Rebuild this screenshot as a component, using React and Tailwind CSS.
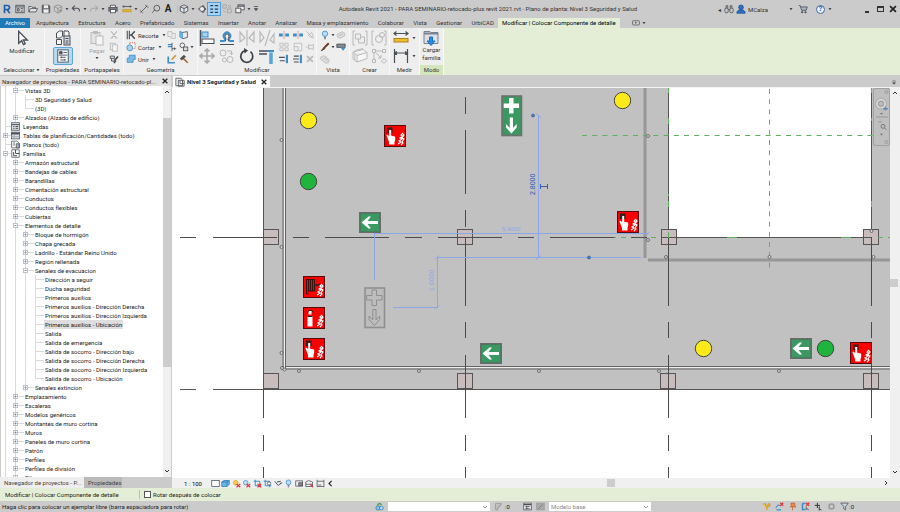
import { useState } from 'react';

const BLUE = '#3b8ec9';
const INK = '#4a4f57';
const OFF = '#b9b9b9';

// every glyph is drawn on a 12x12 grid
const glyphs = {
  revit: <><path d="M3 1v10M3 1.8h3.6a2.4 2.4 0 0 1 0 4.8H3M6 6.6l3.4 4.4" stroke="#1f5fa8" strokeWidth="2" /></>,
  home: <><rect x="1" y="1.5" width="10" height="9" /><path d="M1 3.5h10M3 5.5h2v3H3zM7 5.5h2.500M7 8.500h2.500" /></>,
  open: <><path d="M1 9.500V3h3l1 1h4v1.500M1 9.500l2-4h8.500l-2 4z" fill="#e6e6e6" /></>,
  save: <><path d="M1.500 1.500h8l1 1v8h-9z" fill="#6b7078" /><rect x="3.500" y="1.500" width="5" height="3.500" fill="#eee" stroke="none" /><rect x="3" y="6.500" width="6" height="4" fill="#eee" stroke="none" /></>,
  sync: <><path d="M6 1l4.500 2v5L6 11 1.500 8V3zM1.500 3L6 5.500 10.500 3M6 5.500V11" stroke="#8b8b8b" /><path d="M7 8h4M9 6.500v3.500" stroke="#8b8b8b" /></>,
  undo: <path d="M4.500 2L1.500 5l3 3M1.500 5h6a2.500 2.500 0 0 1 2.500 2.500V9" strokeWidth="1.300" />,
  redo: <path d="M7.500 2l3 3-3 3M10.500 5h-6A2.500 2.500 0 0 0 2 7.500V9" stroke="#a9a9a9" strokeWidth="1.300" />,
  print: <><path d="M3 4V1.500h6V4" fill="#fff" /><rect x="1" y="4" width="10" height="4.500" fill="#7a7f86" /><rect x="3" y="6.500" width="6" height="4" fill="#fff" /></>,
  measure: <><path d="M1 3h10M2.500 1.500L1 3l1.500 1.500M9.500 1.500L11 3 9.500 4.500" /><rect x="1" y="6.500" width="10" height="3" fill="#e9b22e" stroke="#b98a1c" strokeWidth=".6" /></>,
  dim: <path d="M2 10L10 2M1 7.500L4.500 11M7.500 1L11 4.500" />,
  tag: <><path d="M1.500 10.500l3-3.500" /><circle cx="7" cy="5" r="3.500" /></>,
  cube: <path d="M6 1l4.500 2.300v5L6 11 1.500 8.300v-5zM1.500 3.300L6 5.500l4.500-2.200M6 5.500V11" fill="#dfe5ea" />,
  section: <><path d="M1 6h2" /><path d="M7 1.500L10.500 6 7 10.500z" fill={INK} /><circle cx="6" cy="6" r="3" fill="#eee" /></>,
  thin: <path d="M1.500 2h3.500M1.500 6h3.500M1.500 10h3.500M7 2h4M7 6h4M7 10h4" stroke="#1f3f63" strokeWidth="1.500" />,
  hidden: <><path d="M1 1h4v4H1zM6.500 6h4.500v4.500H6.500z" stroke="#a2a2a2" /><path d="M7 1l4 4M11 1L7 5M1.500 7.500l3 3" stroke="#a2a2a2" /></>,
  swap: <><rect x="3.500" y="1" width="7.500" height="6" fill="#eee" /><path d="M3.500 2.500H11" strokeWidth="1.500" /><rect x="1" y="5" width="6" height="5.500" fill="#eee" /></>,
  custom: <path d="M3.500 3h5M4 5.500h4L6 8z" fill={INK} />,
  binoc: <><rect x="1" y="5" width="4" height="5.500" rx="1.500" /><rect x="7" y="5" width="4" height="5.500" rx="1.500" /><path d="M2.500 5V2h2v3M7.500 5V2h2v3M5 6.500h2" /></>,
  person: <><circle cx="6" cy="4" r="2.800" fill="#2f72c4" stroke="#1d4f93" /><path d="M1 11c0-3 2-4 5-4s5 1 5 4z" fill="#2f72c4" stroke="#1d4f93" /></>,
  cart: <><path d="M.8 2h2l1.500 5.500h5.500l1.300-4H3.300" fill="#aab6cc" /><circle cx="5" cy="9.800" r=".9" fill={INK} /><circle cx="9" cy="9.800" r=".9" fill={INK} /></>,
  close: <path d="M2.500 2.500l7 7M9.500 2.500l-7 7" stroke="#222" strokeWidth="2" />,
  cut: <path d="M2.500 1.500l6 8M9.500 1.500l-6 8M2 9.500h2M8 9.500h2" stroke={OFF} strokeWidth="1.400" />,
  copy: <><rect x="1.500" y="1.500" width="6" height="8" stroke={OFF} /><rect x="4" y="3.500" width="6" height="7.500" fill="#f4f4f4" stroke={OFF} /></>,
  brush: <><path d="M1.500 2.500h5v3h-5zM3 5.500v3h3" fill="#d7d7d7" /><path d="M10.800 3L7 7.500" stroke="#444" strokeWidth="2" /><path d="M6.500 7l2 2-2.500 2z" fill="#3a3a3a" /></>,
  cope: <><path d="M1.500 1v10M4 1v10" strokeWidth="1.300" /><path d="M4 6h3M10.500 1.500L6.500 6l4 4.500" strokeWidth="1.800" /></>,
  cutgeo: <><rect x="4.500" y="1" width="6.500" height="6.500" fill="#fff" stroke="#d45b37" strokeDasharray="1.500 1" /><circle cx="4.500" cy="7" r="3.500" fill="#a9d2ee" stroke={BLUE} /></>,
  join: <path d="M4 1.500h7v5H8.500v3.500h-7v-5H4z" fill="#7bbbe6" stroke={BLUE} />,
  face: <path d="M1 2h5v2h4v6H5V8H1zM6 4v4" stroke={OFF} />,
  wall: <><path d="M1 1.500l3 1.500v7l-3-1.500z" fill="#7bbbe6" stroke={BLUE} /><path d="M4 3l6-1v7l-6 1.500" /></>,
  beam: <><path d="M1 3h5M1 5.500h5" stroke={BLUE} strokeWidth="1.500" /><path d="M6 1v10M6 8h5M9 6.500v3" /></>,
  unjoin: <><circle cx="4" cy="4" r="2.800" /><rect x="5.500" y="6" width="5" height="4.500" fill="#ddd" /></>,
  paint: <><path d="M1.500 3v7.500h8" stroke={BLUE} strokeWidth="2" /><path d="M10.500 1.500L5.500 7" stroke="#cf8f2e" strokeWidth="1.800" /></>,
  hammer: <><path d="M5 5l5.500 5.500" stroke="#a65f2a" strokeWidth="1.800" /><path d="M1.500 5.500l4.500-4 1.800 1.800-4.500 4z" fill="#555" /></>,
  split: <><path d="M0 6h4.500M7.500 6H12" stroke={BLUE} strokeWidth="3.500" /><path d="M6 1.500v9" stroke="#d65a4a" strokeDasharray="1.500 1" /></>,
  array: <path d="M1 1.500h4v3.500H1zM7 1.500h4v3.500H7zM1 7h4v3.500H1zM7 7h4v3.500H7z" stroke={OFF} />,
  scale: <path d="M1.500 1.500h9v9h-9zM1.500 5.500H6v5" stroke={OFF} />,
  pin: <path d="M1 6h3.500M4.500 2.500v7M4.500 4h4l1.500-1v6l-1.500-1h-4" stroke={OFF} />,
  unpin: <path d="M1.500 1.500l9 9M4 6l4-3 2 5-3 1z" stroke={OFF} />,
  delete: <path d="M2.500 2.500l7 7M9.500 2.500l-7 7" stroke={OFF} strokeWidth="2" />,
  trim1: <><path d="M0 4h7M1 8h6" strokeWidth="1.300" /><path d="M9.500 1v10" stroke={BLUE} strokeWidth="2.600" /></>,
  trim2: <><path d="M1 2.500h6M0 6h7M1 9.500h6" strokeWidth="1.300" /><path d="M9.500 1v10" stroke={BLUE} strokeWidth="2.600" /></>,
  bulb: <><circle cx="6" cy="4.500" r="3.200" fill="#b9def5" stroke={BLUE} /><path d="M4.800 8.800h2.400M5 10.500h2" /></>,
  paintbrush: <><path d="M10.500 1.500L5.500 6.500" stroke="#6b3a1c" strokeWidth="2.400" /><path d="M5 6L1.500 10.500 6 8z" fill="#7b4a22" stroke="#5a3418" /></>,
  ghost: <><path d="M1.500 5l6-3 3 2v3l-6 3-3-2z" fill="#ddd" stroke={OFF} /><path d="M3.500 7l5-2.500" stroke={OFF} /></>,
  ghost2: <path d="M1 3.500L4.500 2l6.500 5-1 3.500-3 .5L1 6.500zM4 6l4-2.500M6.500 8l3-2" fill="#ddd" stroke={OFF} />,
  line: <><path d="M1 2.500h10v4H1z" fill="#858b93" /><path d="M6.500 7h4L8.500 10z" fill={BLUE} stroke={BLUE} /></>,
  arrow: <path d="M3.500 1v9l2.200-2 1.400 3 1.300-.7L7 7.500h3z" fill="#fff" />,
  box: <rect x="1" y="2" width="10" height="8" fill="#fff" />,
  solid: <path d="M1 4l3-2h7v5l-3 3H1zM1 4h7v6M8 4l3-2" fill="#6bb4e6" stroke="#2878b5" />,
  sun: <><circle cx="5" cy="5" r="3" fill="#ffd34d" stroke="#d39312" /><path d="M6 6.500l5 4.500M11 6.500L6 11" stroke="#d33" strokeWidth="1.600" /></>,
  shadow: <><circle cx="5" cy="5" r="3" fill="#bfe0f6" stroke={BLUE} /><path d="M6 6.500l5 4.500M11 6.500L6 11" stroke="#d33" strokeWidth="1.600" /></>,
  crop: <><path d="M3 1v8h8M1 3h8v8" stroke={BLUE} strokeWidth="1.300" /><path d="M6 6.500l5 4.500M11 6.500L6 11" stroke="#d33" strokeWidth="1.600" /></>,
  cropview: <><path d="M3 1v8h8M1 3h8v8" stroke={BLUE} strokeWidth="1.300" /><circle cx="8" cy="6" r="2.200" fill="#fff" /></>,
  glasses: <path d="M1 3l4 5a2 2 0 0 0 3-2l3-1M4 4l5-1" strokeWidth="1.300" />,
  reveal: <><rect x="1" y="2.500" width="9" height="7" /><rect x="5" y="5" width="5" height="4" fill="#888" /></>,
  analytic: <><path d="M1 10V4l4-2 5 2v6zM1 7h9" /><path d="M7 7l4 4" stroke="#d33" strokeWidth="1.500" /></>,
  constraint: <path d="M1.500 1v10M10.500 1v10M1.500 3h9M3 8h4M1.500 10h9" />,
  chev: <path d="M7.500 2.500L4 6l3.500 3.500" stroke="#222" strokeWidth="1.500" />,
  worksets: <><circle cx="4" cy="8" r="2.800" fill="#8ec5ea" stroke="#2878b5" /><circle cx="8.500" cy="8" r="2.500" fill="#bcdff4" stroke="#2878b5" /><path d="M3.500 5c0-3 4-4 5-1" stroke="#3a9a4a" strokeWidth="1.800" /></>,
  pencil: <path d="M2 10.500V2h8L5 7v3.500zM4 10l6-7" stroke="#999" fill="#c2c2c2" />,
  table: <><rect x="1" y="1.500" width="10" height="9" fill="#eee" /><path d="M1 3.500h10" strokeWidth="1.600" /><path d="M3 6h6M3 8.500h6M5 5v5" /></>,
  dimmed: <><rect x="1" y="1.500" width="10" height="9" fill="#a9a9a9" stroke="#999" /><path d="M3 9l6-6" stroke="#777" /></>,
  linksel: <path d="M1.500 2.500h3.500v3H8v-3h2.500v3L6.500 7v4" stroke="#c58b19" fill="#f4c542" />,
  under: <><path d="M1 8l3-4 4 1M2 10.500h6" stroke={BLUE} strokeWidth="1.400" /><path d="M7 1l4 4M11 1L7 5" stroke="#d33" strokeWidth="1.500" /></>,
  pinned: <path d="M4 1.500h5v3l1.500 2H3L4.500 4.500zM6 7v4" fill="#f08a4b" stroke="#c2571c" />,
  faces: <><path d="M2 2v8h4M2 2h4" stroke={BLUE} strokeWidth="2" /><path d="M7 1l4 4M11 1L7 5" stroke="#d33" strokeWidth="1.500" /><path d="M7 6v4l2-1 1 2" /></>,
  drag: <path d="M4.500 1v7M1 4.500h7M7 6v5l1.500-1.500L10 11" stroke="#333" strokeWidth="1.300" />,
  gear: <><circle cx="6" cy="6" r="3.300" stroke="#999" strokeWidth="2" /></>,
  filter: <path d="M1 1.500h10L7.500 6v4.500L5 9V6z" fill="#c9d7e2" />,
  monitor: <><rect x=".8" y="2.500" width="10.400" height="6.500" rx="1.500" /><path d="M4.800 4.300v3l2.800-1.500z" fill={INK} stroke="none" /></>,
  legend: <><rect x=".8" y="1" width="10.400" height="10" fill="#d8dde3" /><path d="M1 3.500h10M3 6h1.500M3 8.500h1.500M6 6h3.500M6 8.500h3.500" strokeWidth="1.300" /></>,
  sched: <><rect x=".5" y="1.500" width="11" height="9" fill="#d8dde3" /><path d="M.5 3.300h11" strokeWidth="2.600" /><path d="M4 4v6.500M.5 7.500h11" stroke="#9aa0a8" /></>,
  sheet: <><path d="M.8 1.500h7l3.500 3v6H.8z" fill="#fff" /><path d="M7 5h4v5.500H7z" fill="#a8b0b9" /><path d="M2.500 4h3M2.500 6.500h3" /></>,
  family: <><path d="M1 1h10v10H1z" fill="#fff" /><path d="M6 1v5h5M3.500 4v5H8" strokeWidth="1.300" /></>,
  plan: <><path d="M1 1.500h6l2 2v7H1zM4 4h7v7H4z" fill="#f4f4f4" /><path d="M6 4v4h5" /></>,
};

const Glyph = ({ name, className = 'size-3' }) => (
  <svg viewBox="0 0 12 12" className={'shrink-0 ' + className} fill="none" stroke={INK} strokeWidth="1">
    {glyphs[name]}
  </svg>
);

const Caret = () => (
  <svg viewBox="0 0 6 6" className="w-1.5 h-1.5 shrink-0"><path d="M1.500 2h3L3 4.200z" fill="#444" /></svg>
);

const quick = [
  ['revit', 'Revit', 'w-3.5'], ['home', 'Inicio', 'w-3'], ['open', 'Abrir', 'w-3.5'], ['save', 'Guardar', 'w-3'],
  ['sync', 'Sincronizar', 'w-3'], ['caret', 'Más', 'w-1.5'], ['undo', 'Deshacer', 'w-3'], ['caret', 'Más', 'w-1.5'],
  ['redo', 'Rehacer', 'w-3'], ['caret', 'Más', 'w-1.5'], ['print', 'Imprimir', 'w-3.5'], ['measure', 'Medir', 'w-3.5'],
  ['caret', 'Más', 'w-1'], ['dim', 'Cota', 'w-3'], ['tag', 'Etiqueta', 'w-3'],
];
const quickEnd = [
  ['cube', 'Vista 3D', 'w-3'], ['caret', 'Más', 'w-1.5'], ['section', 'Sección', 'w-3'], ['thin', 'Líneas finas', 'w-3'],
  ['hidden', 'Cerrar ocultas', 'w-3.5'], ['swap', 'Cambiar ventana', 'w-3'], ['caret', 'Más', 'w-1.5'], ['custom', 'Personalizar', 'w-2'],
];

const QuickButton = ({ item: [name, label, width] }) => (
  <button aria-label={label} className={`${width} h-3 flex items-center justify-center ${name === 'thin' ? 'bg-[#a9d3f2] outline outline-[#4f9fd8]' : ''}`}>
    {name === 'caret' ? <Caret /> : <Glyph name={name} className="size-2.5" />}
  </button>
);

const TitleBar = () => (
  <header className="h-[18px] flex items-center text-[#333]">
    <div className="flex items-center">
      {quick.map((q, i) => <QuickButton key={i} item={q} />)}
      <button className="w-3 text-[10px] leading-3 font-bold text-[#222]">A</button>
      <span className="w-1 h-2 border-r border-[#bdbdbd]" />
      {quickEnd.map((q, i) => <QuickButton key={i} item={q} />)}
    </div>
    <h1 className="flex-1 text-center pb-0.5">Autodesk Revit 2021 - PARA SEMINARIO-retocado-plus revit 2021.rvt - Plano de planta: Nivel 3 Seguridad y Salud</h1>
    <div className="flex items-center">
      <button aria-label="Contraer" className="w-2">◂</button>
      <button aria-label="Buscar" className="mr-0.5"><Glyph name="binoc" className="size-2.5" /></button>
      <button className="flex items-center gap-0.5"><Glyph name="person" className="size-2.5" />MCalza</button>
      <span className="ml-5 mr-1"><Caret /></span>
      <button aria-label="Tienda" className="mr-2"><Glyph name="cart" className="size-2.5" /></button>
      <button aria-label="Ayuda" className="size-[9px] rounded-full border border-[#3f69a8] bg-[#e8f0fa] text-[#1f5fa8] font-bold leading-[7px] text-[7px]">?</button>
      <span className="ml-0.5"><Caret /></span>
    </div>
    <div className="flex items-center gap-1 ml-8 mr-0.5">
      <button aria-label="Minimizar" className="size-2 flex items-end"><span className="w-1 h-0.5 bg-[#333]" /></button>
      <button aria-label="Maximizar" className="w-[7px] h-[6px] border border-t-2 border-[#333]" />
      <button aria-label="Cerrar"><Glyph name="close" className="size-2.5" /></button>
    </div>
  </header>
);

const tabs = ['Arquitectura', 'Estructura', 'Acero', 'Prefabricado', 'Sistemas', 'Insertar', 'Anotar', 'Analizar', 'Masa y emplazamiento', 'Colaborar', 'Vista', 'Gestionar', 'UrbiCAD'];

const TabRow = () => (
  <nav className="h-[10px] flex items-stretch text-[#333] leading-2">
    <button className="bg-[#1f7ab8] text-white w-[30px]">Archivo</button>
    <div className="w-[468px] flex justify-between pl-0.5">
      {tabs.map(t => <button key={t} className="px-1">{t}</button>)}
    </div>
    <button className="px-1 bg-[#e4eed6] text-black">Modificar | Colocar Componente de detalle</button>
    <button aria-label="Vista de cinta" className="ml-3 flex items-center gap-px"><Glyph name="monitor" className="size-2" /><Caret /></button>
  </nav>
);

const Panel = ({ label, width, children, green, caret }) => (
  <section className={`${width} shrink-0 flex flex-col border-r border-[#f8f8f8] bg-[#eeeeee]`}>
    <div className="flex-1 flex justify-center">{children}</div>
    <div className={`h-[10px] flex items-center justify-center leading-2 pb-px ${green ? 'bg-[#d3e6bb]' : ''}`}>{label}{caret && <Caret />}</div>
  </section>
);

const Col = ({ names, menus }) => (
  <div className="flex flex-col gap-0.5 pt-0.5">
    {names.map((n, i) => (
      <button key={i} aria-label={n} className="h-[10px] flex items-center"><Glyph name={n} className="size-2.5" />{menus && menus[i] ? <Caret /> : null}</button>
    ))}
  </div>
);

// larger ribbon icons, 16x16 grid
const big = {
  props: <><path d="M1.500 3l3-2h3v5l-2 2h-4zM9 1h4l1 1v5H9zM1.500 9.500h5v5h-5z" fill="#f5f5f5" /><rect x="9" y="6" width="6" height="9" fill="#d5dbe2" /><path d="M10.500 8.500h3M10.500 11h3M10.500 13h3" /></>,
  palette: <><rect x="2" y="1" width="12" height="14" fill="#f7f7f7" /><path d="M4 3h3v2.500H4zM8.500 4h4" fill={INK} /><path d="M3 7h10M5 9.500h6M5 12.500h6M6 8.500v2M10 11.500v2" /></>,
  paste: <><rect x="2" y="2.500" width="9" height="11" stroke={OFF} fill="#e4e4e4" /><path d="M4.500 1.500h4v2h-4z" fill={OFF} stroke={OFF} /><rect x="7" y="6" width="7" height="9" fill="#f6f6f6" stroke={OFF} /></>,
  align: <><path d="M1.500 0v16" strokeWidth="1.500" /><rect x="3" y="2" width="6" height="5" fill="#a9d2ee" stroke={BLUE} /><rect x="3" y="9" width="12" height="4.500" fill="#fff" /></>,
  offset: <><path d="M1 11h4c1.500 0 1-2 .5-3a3.300 3.300 0 1 1 5 0c-.5 1-1 3 .5 3h4" stroke={BLUE} strokeWidth="2" /><path d="M1 14.500h14M6 11c2-1 0-4 0-5a2 2 0 0 1 4 0c0 1-2 4 0 5" /></>,
  mirror: <path d="M8 0v16M1 2v10l5-4zM15 2v10l-5-4z" stroke={OFF} strokeWidth="1.200" />,
  mirror2: <path d="M11 0L6 16M1 2v10l4-4zM15 4v9l-4-3z" stroke={OFF} strokeWidth="1.200" />,
  move: <path d="M8 1v14M1 8h14M5.500 3.500L8 1l2.500 2.500M5.500 12.500L8 15l2.500-2.500M3.500 5.500L1 8l2.500 2.500M12.500 5.500L15 8l-2.500 2.500" stroke="#aaa" strokeWidth="1.600" />,
  copy2: <><circle cx="4" cy="5" r="3" stroke={OFF} /><circle cx="11" cy="11.500" r="3" stroke={OFF} /><circle cx="5.500" cy="12" r="2" stroke={OFF} /><path d="M8 3h4.500v3.500M11 5l1.500 1.500L14 5" stroke={OFF} /></>,
  rotate: <><path d="M11.500 3.600A6 6 0 1 1 6 2.600" stroke="#3d4148" strokeWidth="1.700" /><path d="M5 0l4 2.500L5.500 5.500z" fill="#3d4148" stroke="none" /></>,
  trim: <><path d="M0 3h15M0 6h8" strokeWidth="1.300" /><path d="M12 4.500V16" stroke="#5aa5d8" strokeWidth="3.500" /><path d="M8 3h7" stroke={BLUE} strokeWidth="2" /></>,
  group: <path d="M3 1H1v14h2M13 1h2v14h-2M3.500 4h5v5h-5zM8.500 7h4v6h-6V9" stroke={OFF} />,
  assembly: <><path d="M3 1H1v14h2M13 1h2v14h-2" stroke={OFF} /><circle cx="8" cy="9" r="3.500" stroke={OFF} /><circle cx="11" cy="5" r="2.500" stroke={OFF} /></>,
  parts: <path d="M1 4l10-2.500 4 3v6L5 14l-4-3zM1 4l4 3.500 10-3M5 7.500V14M3 2.500L11 .5M2.800 6v6.500" stroke={OFF} fill="#f7f7f7" />,
  similar: <path d="M1.500 1.500h3v3h-3zM11.500 1.500h3v3h-3zM5 3h6M3 5v6M4.500 4.500L10 10M10 7v3H7M1.500 11.500h3v3h-3zM13 10.500l2.500 2.500-2.500 2.500-2.500-2.500z" stroke={OFF} />,
  gauge: <><path d="M1 3.500h14M3.500 1.500l-2.500 2 2.500 2M12.500 1.500l2.500 2-2.500 2" strokeWidth="1.200" /><rect x="1" y="8.500" width="14" height="3.500" fill="#f0bc31" stroke="#a8821c" /></>,
  aligned: <path d="M1.500 1v14M14.500 1v14M1.500 5h13M4 3.500L1.500 5 4 6.500M12 3.500L14.500 5 12 6.500" strokeWidth="1.200" />,
  load: <><path d="M1 1.500h6l1 1h7v11H1z" fill="#dde0e5" stroke="#7b8290" /><path d="M1 3.500h14" stroke="#7b8290" strokeWidth="2" /><path d="M6.500 7h3v4H12l-4 4.500L4 11h2.500z" fill="#2a8be0" stroke="#1b6fbd" /></>,
};
const Big = ({ name, className = 'size-4' }) => (
  <svg viewBox="0 0 16 16" className={'shrink-0 ' + className} fill="none" stroke={INK}>{big[name]}</svg>
);
const BigCol = ({ names, menus }) => (
  <div className="flex flex-col gap-0.5 pt-0.5">
    {names.map((n, i) => (
      <button key={n} aria-label={n} className="flex items-center gap-0.5"><Big name={n} />{menus && <Caret />}</button>
    ))}
  </div>
);

const Ribbon = () => (
  <div className="h-[47px] flex bg-[#e4eed6] text-[#333]">
    <Panel label="Seleccionar" width="w-[45px]" caret>
      <button className="flex flex-col items-center justify-start pt-0.5 leading-2"><Glyph name="arrow" className="size-4 mb-px" />Modificar</button>
    </Panel>
    <Panel label="Propiedades" width="w-[36px]">
      <div className="flex flex-col items-center pt-0.5">
        <button aria-label="Propiedades de tipo" className="h-4"><Big name="props" /></button>
        <button aria-label="Paleta de propiedades" className="mt-px w-5 h-[18px] flex items-center justify-center bg-[#b5d9f3] border border-[#5aa7dc] rounded-xs"><Big name="palette" className="size-3.5" /></button>
      </div>
    </Panel>
    <Panel label="Portapapeles" width="w-[43px]">
      <button className="flex flex-col items-center justify-start text-[#a3a3a3] mr-1 ml-1 pt-0.5"><Big name="paste" /><span>Pegar</span><Caret /></button>
      <Col names={['cut', 'copy', 'brush']} />
    </Panel>
    <Panel label="Geometría" width="w-[74px]">
      <div className="flex flex-col gap-0.5 pt-0.5 w-[41px]">
        {[['cope', 'Recorte'], ['cutgeo', 'Cortar'], ['join', 'Unir']].map(([n, t]) => (
          <button key={n} className="h-[10px] flex items-center gap-0.5"><Glyph name={n} className="size-2.5" />{t}<Caret /></button>
        ))}
      </div>
      <Col names={['face', 'beam', 'paint']} />
      <span className="w-0.5" />
      <Col names={['wall', 'unjoin', 'hammer']} menus={[0, 1, 0]} />
    </Panel>
    <Panel label="Modificar" width="w-[119px]">
      <div className="flex gap-1">
        <BigCol names={['align', 'move']} />
        <BigCol names={['offset', 'copy2']} />
        <BigCol names={['mirror', 'rotate']} />
        <BigCol names={['mirror2', 'trim']} />
        <Col names={['split', 'array', 'trim1']} />
        <Col names={['split', 'scale', 'trim2']} />
      </div>
      <span className="w-0.5" />
      <Col names={['unpin', 'pin', 'delete']} />
    </Panel>
    <Panel label="Vista" width="w-[33px]">
      <Col names={['bulb', 'paintbrush', 'ghost2']} menus={[1, 1, 0]} />
      <Col names={['ghost', 'line']} />
    </Panel>
    <Panel label="Crear" width="w-[40px]">
      <div className="flex gap-[3px]"><BigCol names={['group', 'parts']} /><BigCol names={['assembly', 'similar']} /></div>
    </Panel>
    <Panel label="Medir" width="w-[30px]">
      <BigCol names={['gauge', 'aligned']} menus />
    </Panel>
    <Panel label="Modo" width="w-[24px]" green>
      <button className="flex flex-col items-center justify-start pt-0.5 leading-2"><Big name="load" />Cargar<br />familia</button>
    </Panel>
  </div>
);

// guide cells: | line, + - expanders, t branch, l last branch
const tree = [
  ['|-', 'Vistas 3D'], ['||t', '3D Seguridad y Salud'], ['||l', '(3D)'], ['|+', 'Alzados (Alzado de edificio)'],
  ['t', 'Leyendas', 'legend'], ['+', 'Tablas de planificación/Cantidades (todo)', 'sched'], ['t', 'Planos (todo)', 'sheet'], ['-', 'Familias', 'family'],
  ['|+', 'Armazón estructural'], ['|+', 'Bandejas de cables'], ['|+', 'Barandillas'], ['|+', 'Cimentación estructural'],
  ['|+', 'Conductos'], ['|+', 'Conductos flexibles'], ['|+', 'Cubiertas'], ['|-', 'Elementos de detalle'],
  ['||+', 'Bloque de hormigón'], ['||+', 'Chapa grecada'], ['||+', 'Ladrillo - Estándar Reino Unido'], ['||+', 'Región rellenada'], ['||-', 'Senales de evacuacion'],
  ['|||t', 'Dirección a seguir'], ['|||t', 'Ducha seguridad'], ['|||t', 'Primeros auxilios'], ['|||t', 'Primeros auxilios - Dirección Derecha'],
  ['|||t', 'Primeros auxilios - Dirección Izquierda'], ['|||t', 'Primeros auxilios - Ubicación'], ['|||t', 'Salida'], ['|||t', 'Salida de emergencia'],
  ['|||t', 'Salida de socorro - Dirección bajo'], ['|||t', 'Salida de socorro - Dirección Derecha'], ['|||t', 'Salida de socorro - Dirección Izquierda'], ['|||l', 'Salida de socorro - Ubicación'],
  ['||+', 'Senales extincion'], ['|+', 'Emplazamiento'], ['|+', 'Escaleras'], ['|+', 'Modelos genéricos'], ['|+', 'Montantes de muro cortina'],
  ['|+', 'Muros'], ['|+', 'Paneles de muro cortina'], ['|+', 'Patrón'], ['|+', 'Perfiles'], ['|+', 'Perfiles de división'], ['|+', 'Pilares'],
];

const Guide = ({ kind }) => (
  <svg className="w-[10px] h-[9px] shrink-0" fill="none" stroke="#d9d9d9">
    <path d={kind === 'l' ? 'M4.500 0v5' : 'M4.500 0v9'} />
    {kind !== '|' && <path d="M5 4.500h5" />}
    {(kind === '+' || kind === '-') && <>
      <rect x="2.500" y="2.500" width="4" height="4" fill="#fff" stroke="#bac1cc" />
      <path d={kind === '+' ? 'M3.500 4.500h2M4.500 3.500v2' : 'M3.500 4.500h2'} stroke="#6f86ab" />
    </>}
  </svg>
);

const Browser = () => {
  const [selected, setSelected] = useState('Primeros auxilios - Ubicación');
  return (
    <aside className="w-[172px] shrink-0 flex flex-col border-r border-[#cbcbcb]">
      <div className="h-[10px] bg-[#e1e1e1] flex items-center justify-between pl-0.5 pr-0.5 text-[#333]">
        <span>Navegador de proyectos - PARA SEMINARIO-retocado-pl...</span>
        <button aria-label="Cerrar navegador"><Glyph name="close" className="size-2" /></button>
      </div>
      <div className="flex-1 min-h-0 flex bg-white border-l border-[#cbcbcb]">
        <ul className="flex-1 overflow-hidden text-[#222]">
          {tree.map(([cells, text, icon]) => (
            <li key={text} className="h-[9px] flex items-center">
              {cells.split('').map((c, i) => <Guide key={i} kind={c} />)}
              {icon ? <Glyph name={icon} className="size-[9px] mr-0.5" /> : <span className="w-[3px] border-t border-[#d9d9d9]" />}
              <button onClick={() => setSelected(text)} className={`px-px leading-[9px] whitespace-nowrap ${selected === text ? 'bg-[#dedede]' : ''}`}>{text}</button>
            </li>
          ))}
        </ul>
        <div className="w-2 bg-[#f0f0f0] flex flex-col items-center justify-between py-1">
          <svg viewBox="0 0 6 4" className="w-1.5 h-1 shrink-0" fill="none" stroke="#333"><path d="M1 3l2-2 2 2" /></svg>
          <div className="w-full flex-1 pt-6"><div className="h-[71%] bg-[#cdcdcd]" /></div>
          <svg viewBox="0 0 6 4" className="w-1.5 h-1 shrink-0" fill="none" stroke="#333"><path d="M1 1l2 2 2-2" /></svg>
        </div>
      </div>
      <div className="h-[11px] flex bg-[#cbcbcb] text-[#444]">
        <button className="bg-[#eeeeee] w-[84px] text-left pl-1">Navegador de proyectos - P...</button>
        <button className="bg-[#b9b9b9] px-1 w-[38px]">Propiedades</button>
      </div>
    </aside>
  );
};

const Smoke = () => <path d="M14 19l3-2-2-1 3-2-2-1 3-2-2-1 2-2M17 20l2-2-1-1 2-3-2-1 2-3-1-1" fill="none" stroke="#fff" strokeWidth="1.100" />;

const FireSign = ({ x, y, kind = 'alarm' }) => (
  <g transform={`translate(${x} ${y})`}>
    <rect x=".5" y=".5" width="21" height="21" fill="#fb0000" stroke="#5a0a0a" />
    {kind === 'alarm' && <>
      <rect x="3.500" y="3" width="4.500" height="4.500" fill="#5b1616" stroke="#222" />
      <path d="M5.200 5v6L3 9.500l-.500 1L5 17v2.500h5.500V17c1-2 .8-4 .5-5.500l-3.800-.8V5z" fill="#fff" />
    </>}
    {kind === 'hose' && <>
      <path d="M3 3.500h9M3.500 3v15h2M11.500 3v12M5.500 4v11M7.500 4v11M9.500 4v11M3 15h9" stroke="#3a1111" fill="none" />
      <path d="M11 9h4l2-1.500" stroke="#222" strokeWidth="1.500" />
    </>}
    {kind === 'extinguisher' && <>
      <path d="M4.500 9h5v10.500h-5zM5.500 4h3v3.500h-3z" fill="#fff" />
      <path d="M4 6l2-2.500h3l1 2M4.500 9.500h5" stroke="#222" fill="none" />
    </>}
    <Smoke />
  </g>
);

const ExitSign = ({ x, y }) => (
  <g transform={`translate(${x} ${y})`}>
    <rect x=".5" y=".5" width="21" height="20" fill="#3a9961" stroke="#6b6b6b" />
    <rect x="1.500" y="1.500" width="19" height="18" fill="none" stroke="#51705e" strokeWidth=".7" />
    <path d="M2.500 10.500L9.500 4.500h2.500L8.500 9h10.500v3H8.500l3.500 4.500H9.500z" fill="#fff" />
  </g>
);

const AidSign = ({ x, y, fill, ink, edge, frame = '#6f6f6f' }) => (
  <g transform={`translate(${x} ${y})`}>
    <rect x="1" y="1" width="19.500" height="39.500" fill={fill} stroke={frame} strokeWidth="1.600" />
    <path d="M8 3h4.500v5.500h5.500v4.500h-5.500v5.500H8v-5.500H2.700V8.500H8z" fill={ink} stroke={edge} />
    <path d="M8.800 22.500h3.200v10.500l3.700-4v3.500L10.400 38.500 5 32.500V29l3.800 4z" fill={ink} stroke={edge} />
  </g>
);

const Column = ({ x, y }) => <rect x={x + 0.5} y={y + 0.5} width="15" height="15" fill="#c9bcbc" stroke="#555" />;

const nodes = [[281.5, 140], [281.5, 247], [281.5, 353], [299, 371], [419, 371], [539, 371], [659, 371], [779, 371], [648, 136], [648, 240], [666, 257], [769.5, 257], [873.5, 257], [282, 368], [284.5, 369.5], [871.500, 231]];

const Drawing = () => (
  <svg className="w-full h-full block" fill="none">
    <g transform="translate(-172 -88)">
      <path d="M263 87h1000v302H263z" fill="#c1c1c1" />
      <path d="M669 87h202v150H669z" fill="#fff" />
      <path d="M263.500 87v302M180 389.500h16M213 389.500h1000" stroke="#555" />
      <path d="M283 87v281M282 366.500h1000" stroke="#666" />
      <path d="M284.500 87v280M283 367.500h1000" stroke="#eee" />
      <path d="M285.500 87v282M284 369h1000" stroke="#666" />
      <path d="M645 87v171" stroke="#979797" strokeWidth="3" />
      <path d="M648 260h600" stroke="#979797" strokeWidth="3" />
      <path d="M668.500 87v150M668 237.500h204M871.500 87v150" stroke="#555" />
      <Column x={263} y={229} /><Column x={457} y={229} /><Column x={661} y={229} /><Column x={863} y={229} />
      <Column x={263} y={373} /><Column x={457} y={373} /><Column x={660} y={373} /><Column x={863} y={373} />
      <path d="M661 237.500h15M863 237.500h9" stroke="#555" />
      <g stroke="#4b4b4b">
        <path d="M180 237.500h16M213 237.500h64M293 237.500h16M325 237.500h64M405 237.500h17M438 237.500h64M518 237.500h16M550 237.500h64M631 237.500h16" />
        <path d="M465.500 97v17M465.500 130v64M465.500 210v17M465.500 237v69M465.500 322v16M465.500 355v63M465.500 435v16M465.500 467v60" />
        <path d="M668.500 237v69M668.500 322v16M668.500 355v63M668.500 435v16M668.500 467v60" />
        <path d="M871.500 237v69M871.500 322v16M871.500 355v63M871.500 435v16M871.500 467v60" />
        <path d="M263.500 389v29M263.500 435v16M263.500 467v60" />
      </g>
      <g stroke="#5db35d">
        <path d="M582 135.500h308" strokeDasharray="5 5.200" />
        <path d="M769.500 89v182" strokeDasharray="5 5.200" />
        <path d="M614 237.500h2M621 237.500h5M651 237.500h5M727 237.500h10M841 237.500h10M878 237.500h5M888 237.500h2M668.500 88v5M668.500 118v6M668.500 194v2M668.500 201v6M668.500 232v6M871.500 88v5M871.500 118v3M871.500 201v6" />
      </g>
      <g stroke="#8ba7e8">
        <path d="M538.500 115v142M437 257.500h204M375 233.500h273M374.500 233v47M437.500 257v51M393 307.500h45M536 113.500l5 4M536 259.500l5-4M435 259.500l4-4M435 309.500l4-4M646 235.500l4-4" />
      </g>
      <circle cx="533" cy="115.500" r="1.500" fill="#4a7fc4" stroke="#2b4f86" strokeWidth=".6" />
      <circle cx="589" cy="257.500" r="1.500" fill="#4a7fc4" stroke="#2b4f86" strokeWidth=".6" />
      <path d="M540.500 184v5M547.500 184v5M540.500 186.500h7" stroke="#3a5fae" />
      <g fontFamily="Liberation Sans, sans-serif">
        <text x="502" y="231" fontSize="6" fill="#8ba7e8">5.4000</text>
        <text transform="translate(535 195) rotate(-90)" fontSize="7" fill="#2456b8">2.8000</text>
        <text transform="translate(434 291) rotate(-90)" fontSize="7" fill="#8ba7e8">1.0000</text>
      </g>
      {nodes.map(([x, y]) => <circle key={x + '-' + y} cx={x} cy={y} r="1.500" fill="#d8d8d8" stroke="#555" strokeWidth=".8" />)}
      <g stroke="#444">
        <circle cx="308.500" cy="120.500" r="8.200" fill="#fbe91a" />
        <circle cx="622.500" cy="100.500" r="8.200" fill="#fbe91a" />
        <circle cx="703.500" cy="348.500" r="8.200" fill="#fbe91a" />
        <circle cx="308.500" cy="181.500" r="8.200" fill="#1fb53c" />
        <circle cx="825.500" cy="348.500" r="8.200" fill="#1fb53c" />
      </g>
      <ExitSign x={359} y={212} /><ExitSign x={480} y={343} /><ExitSign x={790} y={338} />
      <AidSign x={501} y={95} fill="#3a9961" ink="#fff" />
      <AidSign x={364} y={287} fill="#bdbdbd" edge="#8f8f8f" frame="#8f8f8f" />
      <FireSign x={384} y={125} /><FireSign x={617} y={211} /><FireSign x={303} y={338} /><FireSign x={850} y={342} />
      <FireSign x={303} y={276} kind="hose" /><FireSign x={303} y={307} kind="extinguisher" />
      <path d="M871.500 355v9" stroke="#4b4b4b" />
    </g>
  </svg>
);

const NavBar = () => (
  <div className="absolute right-0 top-0 w-[17px] h-[58px] rounded-xs border border-[#a0a0a0] bg-[#bfbfbf]/90 flex flex-col items-center">
    <svg viewBox="0 0 16 57" className="w-4 h-[57px]" fill="none" stroke="#999">
      <circle cx="12.500" cy="3" r="1.500" /><circle cx="12.500" cy="54" r="1.500" />
      <circle cx="7" cy="15" r="4.500" stroke="#dedede" strokeWidth="1.500" /><circle cx="7" cy="15" r="2.500" /><circle cx="7" cy="15" r="5.500" strokeWidth=".7" />
      <path d="M9 20h5M11.500 18v4" stroke="#5c8fc0" strokeWidth="1.500" />
      <path d="M6 24.500h3L7.500 26zM6 45.500h3L7.500 47z" fill="#666" stroke="none" />
      <path d="M2 28.500h12M4 33.500h4" /><circle cx="9" cy="38" r="2" stroke="#777" /><path d="M10.500 39.500l2 2" stroke="#777" />
    </svg>
  </div>
);

const viewIcons = ['box', 'solid', 'sun', 'shadow', 'crop', 'cropview', 'glasses', 'bulb', 'reveal', 'analytic', 'constraint', 'chev'];

const Viewport = () => (
  <main className="flex-1 min-w-0 flex flex-col">
    <div className="h-[11px] shrink-0 flex items-stretch justify-between pr-0.5">
      <div className="ml-px bg-white flex items-center px-0.5 text-[#222]">
        <Glyph name="plan" className="size-2.5" />
        <span className="font-bold ml-0.5 mr-1">Nivel 3 Seguridad y Salud</span>
        <button aria-label="Cerrar vista"><Glyph name="close" className="size-2" /></button>
      </div>
      <button aria-label="Lista de vistas" className="pt-0.5"><Glyph name="custom" className="size-2" /></button>
    </div>
    <div className="flex-1 min-h-0 flex">
      <div className="flex-1 min-w-0 relative bg-white overflow-hidden border-t border-[#f4f4f4]">
        <Drawing />
        <NavBar />
      </div>
      <div className="w-[10px] bg-[#f0f0f0] flex flex-col items-center py-1">
        <svg viewBox="0 0 6 4" className="w-1.5 h-1" fill="none" stroke="#333"><path d="M1 3l2-2 2 2" /></svg>
        <div className="w-full flex-1 flex items-center"><span className="w-2 h-2 bg-[#cdcdcd]" /></div>
        <svg viewBox="0 0 6 4" className="w-1.5 h-1" fill="none" stroke="#333"><path d="M1 1l2 2 2-2" /></svg>
      </div>
    </div>
    <div className="h-[10px] shrink-0 bg-[#f0f0f0] flex items-center">
      <button className="w-[38px] text-right pr-2">1 : 100</button>
      <div className="flex items-center justify-between w-[126px]">
        {viewIcons.map(n => <button key={n} aria-label={n} className="w-[10px] flex justify-center"><Glyph name={n} className="size-[9px]" /></button>)}
      </div>
      <div className="flex-1 h-full flex items-center pl-1"><span className="w-[49%]" /><span className="w-2 h-2 bg-[#cdcdcd]" /></div>
      <svg viewBox="0 0 4 6" className="w-1 h-1.5 mr-3" fill="none" stroke="#333"><path d="M1 1l2 2-2 2" /></svg>
    </div>
  </main>
);

const Dropdown = ({ label, value }) => (
  <span className="relative flex items-center">
    <select aria-label={label} className="appearance-none w-[102px] h-[9px] bg-white px-0.5 text-[#888] leading-[9px]"><option>{value}</option></select>
    <svg viewBox="0 0 6 4" className="absolute right-0.5 w-1.5 h-1 pointer-events-none" fill="none" stroke="#999"><path d="M1 1l2 2 2-2" /></svg>
  </span>
);

const StatusBar = () => (
  <footer className="h-[11px] flex items-center bg-[#cbcbcb] text-[#222] shrink-0">
    <p className="w-[375px] pl-0.5">Haga clic para colocar un ejemplar libre (barra espaciadora para rotar)</p>
    <Glyph name="worksets" className="size-[9px] mr-1" />
    <Dropdown label="Subproyecto" value=" " />
    <Glyph name="pencil" className="size-[9px] ml-1" />
    <span className="ml-0.5 w-[18px]">:0</span>
    <Glyph name="table" className="size-[9px]" />
    <Glyph name="dimmed" className="size-[9px] mx-1" />
    <Dropdown label="Opción de diseño" value="Modelo base" />
    <div className="flex items-center gap-1 ml-auto mr-[46px]">
      {['linksel', 'under', 'pinned', 'faces', 'drag', 'gear'].map(n => <button key={n} aria-label={n}><Glyph name={n} className="size-[9px]" /></button>)}
      <button className="flex items-center"><Glyph name="filter" className="size-[9px]" />:0</button>
    </div>
  </footer>
);

const App = () => (
  <div className="h-screen flex flex-col overflow-hidden bg-[#cbcbcb] font-['Roboto','Open_Sans',sans-serif] text-[6px] leading-[9px]">
    <TitleBar />
    <TabRow />
    <Ribbon />
    <div className="flex-1 min-h-0 flex pt-px">
      <Browser />
      <Viewport />
    </div>
    <div className="h-[13px] shrink-0 bg-[#e4eed6] flex items-center text-[#222]">
      <span className="w-[139px] pl-[5px]">Modificar | Colocar Componente de detalle</span>
      <label className="flex items-center gap-0.5 border-l border-[#b9c4a8] pl-1">
        <input type="checkbox" className="appearance-none size-[7px] border border-[#555] bg-white" />
        Rotar después de colocar
      </label>
    </div>
    <StatusBar />
  </div>
);

export default App;
